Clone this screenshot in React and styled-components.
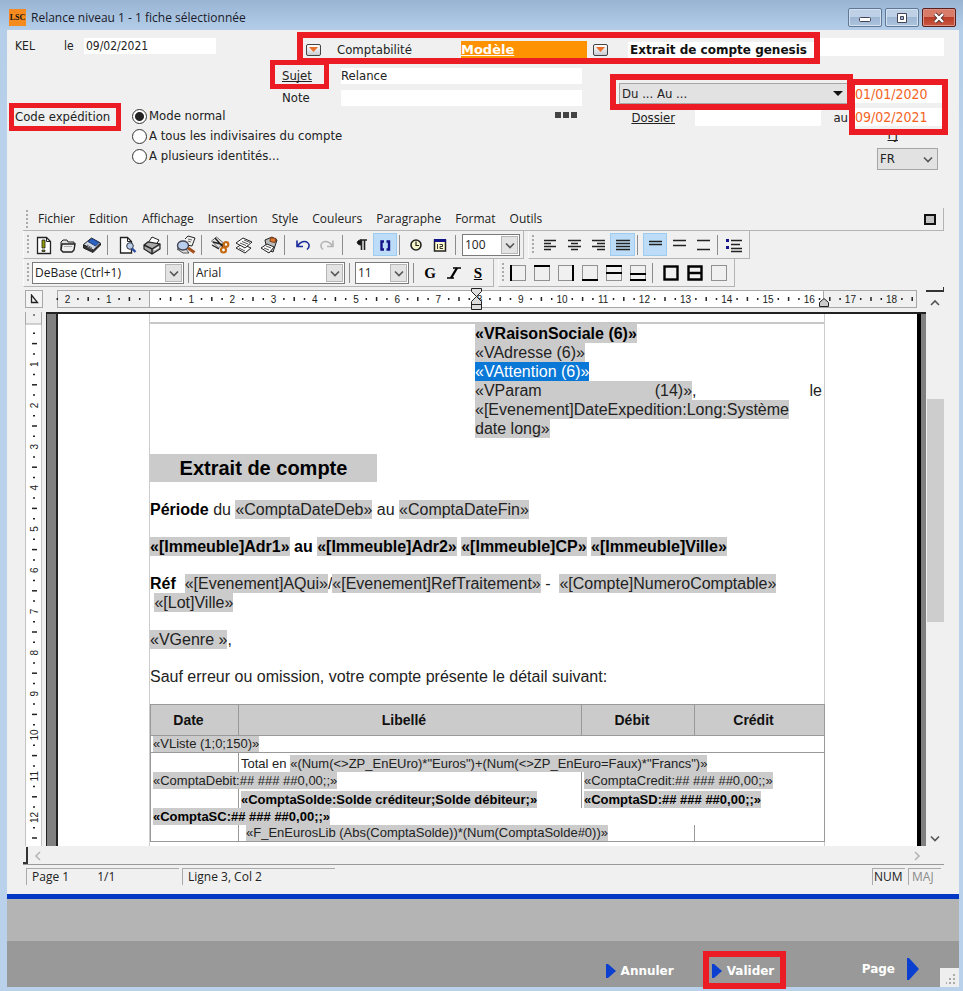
import React from "react";
import styled, { createGlobalStyle, css } from "styled-components";

const formFont = '"DejaVu Sans Condensed", "DejaVu Sans", sans-serif';
const formBold = '"DejaVu Sans", sans-serif';
const uiFont = '"Open Sans", "Noto Sans", sans-serif';
const docFont = '"Liberation Sans", Arial, sans-serif';
const RED = "#ec1c24";

const GlobalStyle = createGlobalStyle`
  * { box-sizing: border-box; }
  body { margin: 0; background: #b9d1ea; }
  button, input, select { font: inherit; color: inherit; margin: 0; }
`;

/* ---------- window ---------- */

const Window = styled.div`
  display: flex;
  flex-direction: column;
  height: 100vh;
  min-height: 700px;
  padding: 0 4px 4px 7px;
  background: linear-gradient(#98b4d3 0, #b4cee9 30px, #b9d1ea 130px);
  color: #222;
  font: 13px/16px ${formFont};
`;

const TitleBar = styled.header`
  display: flex;
  align-items: center;
  flex: none;
  height: 30px;
  padding: 5px 3px 0 2px;
  font: 13px/20px ${uiFont};
  color: #1a1a2a;
`;

const Logo = styled.span`
  width: 17px;
  height: 17px;
  margin-right: 5px;
  background: #f58a1f;
  color: #111;
  font: bold 8px/17px "Liberation Serif", serif;
  text-align: center;
`;

const WindowTitle = styled.h1`
  flex: 1;
  margin: 0;
  font: 12px/20px ${uiFont};
`;

const WindowButtons = styled.div`
  display: flex;
  gap: 3px;
`;

const WindowButton = styled.button`
  display: grid;
  place-items: center;
  width: 34px;
  height: 19px;
  padding: 0;
  border: 1px solid ${(p) => (p.$close ? "#5b1f1c" : "#5f7895")};
  border-radius: 2px;
  box-shadow: inset 0 0 0 1px ${(p) => (p.$close ? "#dd9185" : "#d3e1f0")};
  background: ${(p) =>
    p.$close
      ? "linear-gradient(#d97b69 0 45%, #b93a24 46%, #c95841)"
      : "linear-gradient(#bdd0e6 0 45%, #9db6d2 46%, #adc4de)"};
`;

const Content = styled.main`
  display: flex;
  flex-direction: column;
  flex: 1;
  min-height: 0;
  background: #f0f0f0;
`;

/* ---------- form ---------- */

const Form = styled.form`
  flex: none;
  height: 178px;
  padding: 8px 15px 0 8px;
`;

const Marked = styled.div`
  position: relative;
  &::after {
    content: "";
    position: absolute;
    z-index: 2;
    inset: ${(p) => p.$inset || "-6px"};
    border: ${(p) => p.$line || 6}px solid ${RED};
    pointer-events: none;
  }
`;

const TopRow = styled.div`
  display: flex;
  align-items: flex-start;
  height: 28px;
  font-size: 12px;
`;

const Label = styled.label`
  width: ${(p) => (p.$width ? `${p.$width}px` : "auto")};
  text-decoration: ${(p) => (p.$link ? "underline" : "none")};
  text-decoration-skip-ink: none;
  white-space: nowrap;
`;

const FieldLink = styled.a`
  color: inherit;
  text-decoration: underline;
  text-decoration-skip-ink: none;
`;

const TextInput = styled.input`
  width: ${(p) => (p.$width ? `${p.$width}px` : "auto")};
  flex: ${(p) => (p.$grow ? "1" : "none")};
  min-width: 0;
  height: ${(p) => p.$height || 16}px;
  padding: 0 ${(p) => p.$pad ?? 2}px;
  border: 0;
  outline: 0;
  background: #fff;
  ${(p) =>
    p.$accent &&
    css`
      color: #f3641e;
      font-size: 14px;
    `}
  ${(p) =>
    p.$strong &&
    css`
      color: #111;
      font: bold 12px/16px ${formBold};
    `}
`;

const ModelGroup = styled(Marked)`
  display: flex;
  align-items: center;
  width: 511px;
  height: 20px;
  margin-left: 87px;
  padding: 3px 0 0 3px;
`;

const ModelLink = styled.a`
  width: 126px;
  height: 17px;
  margin-right: 6px;
  background: #ff9200;
  color: #fff;
  font: bold 13px/18px ${formBold};
`;

const ModelLabel = styled.span`
  width: 140px;
  padding-left: 16px;
  font-size: 13px;
`;

const DropButton = styled.button`
  display: grid;
  place-items: center;
  width: 15px;
  height: 12px;
  margin-right: ${(p) => p.$after || 0}px;
  padding: 0;
  border: 1px solid #444;
  border-radius: 2px;
  background: linear-gradient(#fff, #c9cdd3);
`;

const FormBody = styled.div`
  display: flex;
  justify-content: space-between;
`;

const LeftBlock = styled.div`
  width: 567px;
`;

const SubjectGrid = styled.div`
  display: grid;
  grid-template-columns: 59px 241px;
  row-gap: 6px;
  justify-content: end;
  padding-top: 2px;
`;

const SubjectMark = styled(Marked)`
  justify-self: start;
`;

const Expedition = styled.div`
  display: flex;
  align-items: flex-start;
  margin-top: 2px;
`;

const ExpeditionMark = styled(Marked)`
  width: 117px;
  padding-top: 1px;
`;

const RadioGroup = styled.div`
  display: grid;
  row-gap: 4px;
  flex: 1;
`;

const RadioLabel = styled.label`
  display: flex;
  align-items: center;
  gap: 2px;
  height: 16px;
`;

const Radio = styled.input`
  appearance: none;
  width: 15px;
  height: 15px;
  border: 1px solid #333;
  border-radius: 50%;
  background: #fff;
  &:checked {
    background: radial-gradient(circle, #222 0 4px, #fff 5px);
  }
`;

const Dots = styled.button`
  display: flex;
  gap: 2px;
  margin: 4px 5px 0 0;
  padding: 0;
  border: 0;
  background: none;
  & > span {
    width: 6px;
    height: 6px;
    background: #444;
  }
`;

const RightBlock = styled.div`
  display: flex;
  gap: 7px;
  margin-top: 17px;
  padding-right: 2px;
`;

const PeriodColumn = styled.div`
  width: 229px;
`;

const DossierRow = styled.div`
  display: flex;
  align-items: center;
  justify-content: flex-end;
  margin-top: 6px;
`;

const AuLabel = styled.span`
  padding-left: 12px;
`;

const DateColumn = styled.div`
  display: flex;
  flex-direction: column;
  align-items: flex-end;
  width: 87px;
  margin-top: 2px;
`;

const Dates = styled(Marked)`
  display: grid;
  row-gap: 5px;
`;

const PjLink = styled(FieldLink)`
  margin: 1px 44px 0 0;
`;

const SelectBox = styled.span`
  display: inline-grid;
  grid-template-columns: 1fr auto;
  width: ${(p) => p.$width}px;
  height: ${(p) => p.$height || 22}px;
  border: 1px solid ${(p) => (p.$flat ? "#7a7a7a" : "#a6a6a6")};
  background: ${(p) => (p.$flat ? "#fff" : "#e2e2e2")};
  margin: ${(p) => p.$margin || "0"};
  & > select {
    grid-area: 1 / 1 / 2 / 3;
    appearance: none;
    width: 100%;
    min-width: 0;
    padding: 0 20px 0 2px;
    border: 0;
    outline: 0;
    background: transparent;
  }
  & > span {
    grid-area: 1 / 2;
    display: grid;
    place-items: center;
    width: 18px;
    pointer-events: none;
    ${(p) =>
      p.$flat &&
      css`
        margin: 1px;
        width: 17px;
        border: 1px solid #b5b5b5;
        background: #e3e3e3;
      `}
  }
`;

/* ---------- editor ---------- */

const Editor = styled.section`
  display: flex;
  flex-direction: column;
  flex: 1;
  min-height: 0;
  margin: 0 15px 9px 16px;
  font: 12px/16px ${uiFont};
`;

const MenuBar = styled.nav`
  display: flex;
  align-items: center;
  flex: none;
  height: 23px;
  padding-right: 7px;
  border: solid #b4b4b4;
  border-width: 0 1px 1px 0;
`;

const MenuItem = styled.button`
  margin-right: 14px;
  padding: 0;
  border: 0;
  background: none;
`;

const RestoreButton = styled.button`
  width: 12px;
  height: 11px;
  margin-left: auto;
  padding: 0;
  border: 2px solid #111;
  background: #c4c4c4;
`;

const Grip = styled.span`
  flex: none;
  width: 2px;
  height: 19px;
  margin: 0 ${(p) => p.$after ?? 6}px 0 3px;
  background: repeating-linear-gradient(#aaa 0 2px, transparent 2px 4px);
`;

const ToolRow = styled.div`
  display: flex;
  flex: none;
  gap: 4px;
  height: 28px;
`;

const Toolbar = styled.div`
  display: flex;
  align-items: center;
  padding-right: 3px;
  border: solid #b4b4b4;
  border-width: 0 1px 1px 0;
  border-left: 1px solid #fafafa;
`;

const ToolButton = styled.button`
  display: grid;
  place-items: center;
  width: ${(p) => (p.$wide ? 25 : 24)}px;
  height: 23px;
  padding: 0;
  border: 1px solid ${(p) => (p.$active ? "#9fcbee" : "transparent")};
  background: ${(p) => (p.$active ? "#bcdcf7" : "none")};
`;

const Separator = styled.span`
  width: 1px;
  height: 20px;
  margin: 0 ${(p) => p.$gap || 4}px 0 ${(p) => p.$before ?? 3}px;
  background: #8c8c8c;
`;

const Workspace = styled.div`
  display: grid;
  grid-template-columns: 23px minmax(0, 1fr) 18px;
  grid-template-rows: 25px minmax(0, 1fr) 19px;
  flex: 1;
  min-height: 0;
`;

const Corner = styled.div`
  display: grid;
  place-items: center;
  width: 18px;
  height: 18px;
  margin: 3px 0 0 2px;
  border: 1px solid #a8a8a8;
  background: #f4f4f4;
`;

const RulerTrack = styled.div`
  overflow: hidden;
  & > svg {
    display: block;
  }
`;

const ScrollCorner = styled.div`
  height: 5px;
  border: solid #333;
  border-width: 0 1px 2px 0;
`;

const VRuler = styled.div`
  overflow: hidden;
  margin-left: 2px;
  & > svg {
    display: block;
  }
`;

const Pane = styled.div`
  display: flex;
  overflow: hidden;
  border: solid #222;
  border-width: 2px 0 0 1px;
`;

const Desk = styled.div`
  flex: none;
  width: ${(p) => (p.$right ? 9 : 11)}px;
  background: #808080;
  ${(p) =>
    p.$right
      ? css`
          border-left: 4px solid #000;
        `
      : css`
          border-right: 2px solid #222;
        `}
`;

const Paper = styled.article`
  flex: 1;
  min-width: 0;
  padding-left: 91px;
  overflow: hidden;
  background: #fff;
`;

const PaperBody = styled.div`
  width: 676px;
  min-height: 100%;
  padding-top: 8px;
  border: solid #ccc;
  border-width: 0 1px;
  color: #222;
  font: 16px/19px ${docFont};
`;

const AddressZone = styled.div`
  border-top: 2px solid #c8c8c8;
  padding: 0 2px 0 325px;
`;

const Merge = styled.span`
  padding: 1px 0;
  background: ${(p) => (p.$selected ? "#0a78d7" : "#cbcbcb")};
  color: ${(p) => (p.$selected ? "#fff" : "inherit")};
`;

const Line = styled.p`
  margin: 0;
  font-weight: ${(p) => (p.$bold ? "bold" : "normal")};
  text-align-last: ${(p) => (p.$spread ? "justify" : "auto")};
  color: ${(p) => (p.$bold ? "#000" : "inherit")};
`;

const DocTitle = styled.h2`
  width: 227px;
  margin: 16px 0 18px;
  background: #cbcbcb;
  color: #000;
  font: bold 20px/28px ${docFont};
  text-align: center;
`;

const Paragraph = styled.p`
  margin: 0 0 18px;
  white-space: pre;
  & b {
    color: #000;
  }
`;

const DocTable = styled.table`
  width: 674px;
  table-layout: fixed;
  border-collapse: collapse;
  border: 1px solid #999;
  font: 13px/16px ${docFont};
  white-space: nowrap;
`;

const HeadCell = styled.th`
  height: 31px;
  padding: 0 12px 0 0;
  border: 1px solid #999;
  background: #cbcbcb;
  color: #111;
  font: bold 14px/18px ${docFont};
`;

const Cell = styled.td`
  height: ${(p) => p.$height || 17}px;
  padding: 0 0 0 ${(p) => p.$pad || 2}px;
  overflow: hidden;
  border-left: ${(p) => (p.$line ? "1px solid #999" : "0")};
  border-bottom: ${(p) => (p.$under ? "1px solid #999" : "0")};
  vertical-align: bottom;
  font-weight: ${(p) => (p.$bold ? "bold" : "normal")};
  color: ${(p) => (p.$bold ? "#000" : "inherit")};
`;

const VScroll = styled.div`
  display: flex;
  flex-direction: column;
  align-items: center;
  margin-top: -18px;
`;

const ScrollButton = styled.button`
  display: grid;
  place-items: center;
  width: 17px;
  height: 17px;
  padding: 0;
  border: 0;
  background: none;
`;

const VTrack = styled.div`
  display: flex;
  flex-direction: column;
  flex: 1;
  align-self: stretch;
  margin-left: 1px;
`;

const Thumb = styled.div`
  flex: 0 0 43%;
  background: #cdcdcd;
`;

const ThumbLead = styled.div`
  flex: 0 0 17%;
`;

const HScroll = styled.div`
  grid-column: 1 / -1;
  display: flex;
  justify-content: space-between;
  padding: 1px 19px 0 0;
  border-bottom: 1px solid #999;
`;

const HLead = styled.div`
  display: flex;
  gap: 1px;
`;

const HMark = styled.span`
  width: 5px;
  height: 17px;
  border: solid #333;
  border-width: 0 2px 2px 0;
`;

const StatusBar = styled.footer`
  display: flex;
  flex: none;
  gap: 3px;
  height: 20px;
  padding: 3px 3px 0;
  font-size: 12px;
`;

const StatusCell = styled.span`
  display: flex;
  gap: 28px;
  width: ${(p) => p.$width}px;
  height: 17px;
  padding-left: ${(p) => p.$pad ?? 5}px;
  margin-left: ${(p) => (p.$push ? "auto" : "0")};
  border: solid #aaa;
  border-width: 1px 0 0 1px;
  color: ${(p) => (p.$dim ? "#8a8a8a" : "#222")};
  white-space: nowrap;
`;

/* ---------- bottom bands ---------- */

const UpperBand = styled.div`
  flex: none;
  height: 47px;
  border-top: 5px solid #0238c4;
  background: #b4b4b4;
`;

const ActionBand = styled.div`
  display: flex;
  align-items: flex-start;
  justify-content: flex-end;
  flex: none;
  height: 46px;
  background: #999;
`;

const ActionButton = styled.button`
  display: flex;
  align-items: center;
  gap: ${(p) => p.$gap || 5}px;
  height: 20px;
  margin: ${(p) => p.$margin || "20px 0 0"};
  padding: 0;
  border: 0;
  background: none;
  color: #fff;
  font: bold 12px/16px ${formBold};
`;

const ValidMark = styled(Marked)`
  margin: 16px 82px 0 35px;
  width: 71px;
  height: 26px;
`;

const SizeGrip = styled.span`
  display: grid;
  place-items: end;
  align-self: flex-end;
  width: 19px;
  height: 19px;
  margin-left: 21px;
  padding: 3px;
  background: #eee;
`;

/* ---------- drawings ---------- */

const Svg = ({ children, w = 20, h = 20, box }) => (
  <svg width={w} height={h} viewBox={box || `0 0 ${w} ${h}`} fill="none" stroke="#222" aria-hidden="true">
    {children}
  </svg>
);

const Chevron = ({ color = "#555", dir = "down" }) => {
  const d = {
    down: "M1 3.5l4 4 4-4",
    up: "M1 7l4-4 4 4",
    left: "M7 1L3 5l4 4",
    right: "M3 1l4 4-4 4",
  }[dir];
  return (
    <Svg w={10} h={10}>
      <path d={d} stroke={color} strokeWidth="1.6" />
    </Svg>
  );
};

const Triangle = ({ w = 10, h = 14 }) => (
  <Svg w={w} h={h}>
    <path d={`M0 0h2L${w} ${h / 2} 2 ${h}H0z`} fill="#0a3fd0" stroke="none" />
  </Svg>
);

const icons = {
  nouveau: (
    <>
      <path d="M3.500 2.500h9l4 4v12h-13z" fill="#fff" strokeWidth="1.300" />
      <path d="M12.500 2.500v4h4" />
      <path d="M8 5h3v8H8zM8 15h3v1.500H8z" fill="#8f9a00" strokeWidth=".8" />
    </>
  ),
  ouvrir: (
    <>
      <path d="M3 15V7l2-2h4l1 2h6v2" fill="#ddd" />
      <path d="M3 15l1-6h13l-1 6-2 2H5z" fill="#eee" strokeWidth="1.400" />
      <path d="M6 11.500h8" stroke="#aaa" />
    </>
  ),
  enregistrer: (
    <>
      <path d="M1.500 9.500l8-6.500 9 5-7 7.500z" fill="#cfd6e4" />
      <path d="M6 6.500l4-3 7 4-3.500 3.500z" fill="#2a62c4" stroke="#223a70" />
      <path d="M1.500 10v3l9.500 4.500 7.500-7.500V8.500L11.500 15z" fill="#333" />
      <path d="M5 10l5 3M5 12l5 2.500" stroke="#666" />
    </>
  ),
  apercu: (
    <>
      <path d="M3.500 2.500h7l4 4v11.500h-11z" fill="#fff" strokeWidth="1.300" />
      <path d="M10.500 2.500v4h4" />
      <circle cx="13" cy="11" r="3.300" fill="#b9cdea" stroke="#334" />
      <path d="M15 13.500l3.500 3.500" stroke="#2a4aa0" strokeWidth="2.400" />
    </>
  ),
  imprimer: (
    <>
      <path d="M6 8l4-6 7 3-3 5" fill="#fff" />
      <path d="M2 10l4-3 12 2v5l-8 5-8-5z" fill="#aaa" strokeWidth="1.200" />
      <path d="M2 10l8 4 8-5M10 14v5" strokeWidth="1.400" />
      <path d="M12 15l5-3" stroke="#fff" strokeWidth="1.400" />
    </>
  ),
  rechercher: (
    <>
      <path d="M9 4l3-3 7 2-3 8-5-1" fill="#f2f2f2" />
      <path d="M12 4l4 1M12 6l3 1" stroke="#666" />
      <path d="M1 14l6 4h6l-3-4z" fill="#ddd" stroke="#555" />
      <ellipse cx="7" cy="10.500" rx="5.500" ry="4.500" fill="#b9cdee" stroke="#445" strokeWidth="1.400" />
      <path d="M12 13l6.500 4.500" stroke="#a4501d" strokeWidth="3" />
    </>
  ),
  couper: (
    <>
      <path d="M1.500 6l5-4 7 6-5 5z" fill="#e0e0e0" stroke="#666" />
      <path d="M5 3l8 9M3 7l11 3M2 10l7 4" strokeWidth="1.400" />
      <circle cx="16" cy="9.500" r="2.300" fill="#fff" stroke="#c46a10" strokeWidth="2.200" />
      <circle cx="13.500" cy="15" r="2.500" fill="#fff" stroke="#c46a10" strokeWidth="2.200" />
    </>
  ),
  copier: (
    <>
      <path d="M2 13l6-4 9 4-6 5z" fill="#fff" />
      <path d="M2 8l7-5 9 4-7 6z" fill="#fff" />
      <path d="M6 8l6 2.500M8 6.500l6 2.500M10 5l6 2.500M5 13l6 3" stroke="#555" />
    </>
  ),
  coller: (
    <>
      <path d="M6 5l7-3 5 3-4 12-6-2z" fill="#bbb" />
      <path d="M2 13l6-4 7 3-5 6z" fill="#fff" />
      <path d="M5 13l5 2M7 11l5 2" stroke="#555" />
      <path d="M11.500 2.500l5.500 1-1 4-5-1z" fill="#d9752c" stroke="#7a3c14" />
    </>
  ),
  annuler: <path d="M4 5.500v6h6M4.500 11C7 6.500 12 5.500 14.500 7.500c2.500 2 2 5-.5 7" stroke="#1a2a9a" strokeWidth="1.600" />,
  retablir: <path d="M16 5.500v6h-6M15.500 11C13 6.500 8 5.500 5.500 7.500c-2.500 2-2 5 .5 7" stroke="#b4b4b4" strokeWidth="1.600" />,
  symboles: (
    <>
      <path d="M9 5h7M10.500 5v10M13.500 5v10" strokeWidth="1.600" />
      <path d="M10 5v5c-5 0-5-5 0-5z" fill="#111" />
    </>
  ),
  references: <path d="M9 6.500H6.500v8H9M11.500 6.500H14v8h-2.500" stroke="#13138a" strokeWidth="2.400" />,
  heure: (
    <>
      <circle cx="10" cy="10" r="5" fill="#f6f6c8" strokeWidth="1.600" />
      <path d="M10 6.500V10.500h3" strokeWidth="1.200" />
    </>
  ),
  date: (
    <>
      <rect x="4.500" y="5" width="11" height="11" fill="#fffbd0" strokeWidth="1.500" />
      <path d="M4 5.500h12" stroke="#13138a" strokeWidth="3" />
      <path d="M7.500 9v5M9.500 9.500h3v2h-2.500v2h3" stroke="#333" />
    </>
  ),
  gauche: <path d="M4 5.500h12M4 8.500h7M4 11.500h12M4 14.500h7" strokeWidth="1.400" />,
  centre: <path d="M4 5.500h13M7 8.500h7M4 11.500h13M7 14.500h7" strokeWidth="1.400" />,
  droite: <path d="M4 5.500h13M9 8.500h8M4 11.500h13M9 14.500h8" strokeWidth="1.400" />,
  justifie: <path d="M3 5.500h14M3 8.500h14M3 11.500h14M3 14.500h14" strokeWidth="1.400" />,
  simple: <path d="M4 6.500h13M4 9.500h13" strokeWidth="1.400" />,
  demi: <path d="M4 5.500h13M4 10.500h13" strokeWidth="1.400" />,
  double: <path d="M4 5.500h13M4 14.500h13" strokeWidth="1.400" />,
  puces: (
    <>
      <path d="M2 4h3v3H2zM2 11h3v3H2z" fill="#13138a" stroke="none" />
      <path d="M7 5.500h11M7 9.500h9M7 13.500h11M7 16.500h11" strokeWidth="1.300" />
    </>
  ),
};

const Dotted = () => <rect x="2.500" y="2.500" width="15" height="15" stroke="#333" strokeDasharray="1 1" />;
const borderIcon = (d) => (
  <>
    <Dotted />
    <path d={d} stroke="#000" strokeWidth="2" />
  </>
);
const borderTools = [
  ["Bordure gauche", borderIcon("M3 2v16")],
  ["Bordure haute", borderIcon("M2 3h16")],
  ["Bordure droite", borderIcon("M17 2v16")],
  ["Bordure basse", borderIcon("M2 17h16")],
  ["Bordures haute et milieu", borderIcon("M2 3h16M2 10h16")],
  ["Bordures milieu et basse", borderIcon("M2 11h16M2 17h16")],
];
const frameTools = [
  ["Cadre", <rect key="a" x="3.500" y="3.500" width="13" height="13" stroke="#000" strokeWidth="2.400" />],
  ["Cadre et lignes", <path key="b" d="M3.500 3.500h13v13h-13zM3.500 10h13" stroke="#000" strokeWidth="2.400" />],
  ["Sans bordure", <Dotted key="c" />],
];

/* one centimetre on screen, in pixels */
const CM = 41.2;

const marks = (from, to, zero) => {
  const out = [];
  for (let q = from * 4; q <= to * 4; q += 1) {
    if (q !== 0) out.push({ q, at: zero + (q / 4) * CM });
  }
  return out;
};

const HorizontalRuler = () => (
  <Svg w={880} h={25} box="0 0 880 25">
    <rect x="11.500" y="3.500" width="859" height="17" fill="#f0f0f0" stroke="#a8a8a8" />
    <rect x="103.500" y="3.500" width="674" height="17" fill="#fff" stroke="#a8a8a8" />
    {marks(-2.25, 18.5, 104).map(({ q, at }) =>
      q % 4 === 0 ? (
        <text key={q} x={at} y="16" textAnchor="middle" fontSize="10" fontFamily="Liberation Sans" fill="#222" stroke="none">
          {Math.abs(q / 4)}
        </text>
      ) : (
        <path key={q} d={q % 2 === 0 ? `M${at} 10v4` : `M${at} 11v2`} strokeWidth="1.500" />
      )
    )}
    <path d="M425.500 1.500h10v3l-5 5-5-5zM430.500 9.500l5 5v8h-10v-8zM425.500 17.500h10" fill="#ddd" />
    <path d="M773.500 19.500v-4l4.500-4 4.500 4v4z" fill="#ccc" />
  </Svg>
);

const VerticalRuler = () => (
  <Svg w={18} h={600}>
    <rect x=".5" y="-1" width="16" height="602" fill="#fff" stroke="#c4c4c4" />
    <rect x=".5" y="-1" width="16" height="13" fill="#f0f0f0" stroke="#a8a8a8" />
    <path d="M9 2.500v1" strokeWidth="2" />
    {marks(0, 12.5, 11).map(({ q, at }) =>
      q % 4 === 0 ? (
        <text
          key={q}
          x="0"
          y="0"
          transform={`translate(13 ${at}) rotate(-90)`}
          textAnchor="middle"
          fontSize="10"
          fontFamily="Liberation Sans"
          fill="#222"
          stroke="none"
        >
          {q / 4}
        </text>
      ) : (
        <path key={q} d={q % 2 === 0 ? `M7 ${at}h5` : `M8 ${at}h2`} strokeWidth="1.500" />
      )
    )}
  </Svg>
);

/* ---------- parts ---------- */

const Tool = ({ name, active, wide }) => (
  <ToolButton type="button" aria-label={name} $active={active} $wide={wide}>
    <Svg>{icons[name]}</Svg>
  </ToolButton>
);

const Drop = ({ label, value, arrow, ...box }) => (
  <SelectBox {...box}>
    <select aria-label={label} defaultValue={value}>
      <option>{value}</option>
    </select>
    <span>
      {arrow === "solid" ? (
        <Svg w={10} h={6}>
          <path d="M0 0h10L5 5z" fill="#111" stroke="none" />
        </Svg>
      ) : (
        <Chevron />
      )}
    </span>
  </SelectBox>
);

const OrangeDrop = ({ label, after }) => (
  <DropButton type="button" aria-label={label} $after={after}>
    <Svg w={9} h={7}>
      <path d="M0 1h9L4.500 6z" fill="#e8702a" stroke="none" />
    </Svg>
  </DropButton>
);

const menus = ["Fichier", "Edition", "Affichage", "Insertion", "Style", "Couleurs", "Paragraphe", "Format", "Outils"];
const modes = ["Mode normal", "A tous les indivisaires du compte", "A plusieurs identités..."];

const HeaderForm = () => (
  <Form onSubmit={(e) => e.preventDefault()}>
    <TopRow>
      <Label as="span" $width={49}>KEL</Label>
      <Label htmlFor="date" $width={20}>le</Label>
      <TextInput id="date" $width={132} defaultValue="09/02/2021" />
      <ModelGroup>
        <OrangeDrop label="Choisir le domaine" />
        <ModelLabel>Comptabilité</ModelLabel>
        <ModelLink href="#modele">Modèle</ModelLink>
        <OrangeDrop label="Choisir le modèle" after={20} />
        <TextInput
          aria-label="Modèle choisi"
          $grow
          $strong
          defaultValue="Extrait de compte genesis"
        />
      </ModelGroup>
      <TextInput aria-label="Complément" $grow $height={18} />
    </TopRow>
    <FormBody>
      <LeftBlock>
        <SubjectGrid>
          <SubjectMark $line={5} $inset="-8px -17px -5px -12px">
            <Label htmlFor="sujet" $link>Sujet</Label>
          </SubjectMark>
          <TextInput id="sujet" $pad={0} defaultValue="Relance" />
          <Label htmlFor="note">Note</Label>
          <TextInput id="note" />
        </SubjectGrid>
        <Expedition>
          <ExpeditionMark $line={5} $inset="-5px 11px -6px -6px" id="expedition">
            Code expédition
          </ExpeditionMark>
          <RadioGroup role="radiogroup" aria-labelledby="expedition">
            {modes.map((mode, i) => (
              <RadioLabel key={mode}>
                <Radio type="radio" name="mode" defaultChecked={i === 0} />
                {mode}
              </RadioLabel>
            ))}
          </RadioGroup>
          <Dots type="button" aria-label="Plus">
            <span />
            <span />
            <span />
          </Dots>
        </Expedition>
      </LeftBlock>
      <RightBlock>
        <PeriodColumn>
          <Marked $inset="-9px -5px -6px -9px">
            <Drop label="Période" value="Du ... Au ..." arrow="solid" $width={229} $height={21} />
          </Marked>
          <DossierRow>
            <Label htmlFor="dossier" $link $width={64}>Dossier</Label>
            <TextInput id="dossier" $width={126} />
            <AuLabel>au</AuLabel>
          </DossierRow>
        </PeriodColumn>
        <DateColumn>
          <Dates $inset="-6px -6px -9px -6px">
            <TextInput aria-label="Du" $accent $width={87} $height={18} $pad={0} defaultValue="01/01/2020" />
            <TextInput aria-label="Au" $accent $width={87} $height={18} $pad={0} defaultValue="09/02/2021" />
          </Dates>
          <PjLink href="#pj">PJ</PjLink>
          <Drop label="Langue" value="FR" $width={61} $margin="5px 4px 0 0" />
        </DateColumn>
      </RightBlock>
    </FormBody>
  </Form>
);

const Letter = () => (
  <PaperBody>
    <AddressZone>
      <Line $bold><Merge>«VRaisonSociale (6)»</Merge></Line>
      <Line><Merge>«VAdresse (6)»</Merge></Line>
      <Line><Merge $selected>«VAttention (6)»</Merge></Line>
      <Line $spread><Merge>«VParam (14)»</Merge>, le</Line>
      <Line><Merge>«[Evenement]DateExpedition:Long:Système<br />date long»</Merge></Line>
    </AddressZone>
    <DocTitle>Extrait de compte</DocTitle>
    <Paragraph>
      <b>Période</b> du <Merge>«ComptaDateDeb»</Merge> au <Merge>«ComptaDateFin»</Merge>
    </Paragraph>
    <Paragraph>
      <b>
        <Merge>«[Immeuble]Adr1»</Merge> au <Merge>«[Immeuble]Adr2»</Merge> <Merge>«[Immeuble]CP»</Merge>{" "}
        <Merge>«[Immeuble]Ville»</Merge>
      </b>
    </Paragraph>
    <Paragraph>
      <b>Réf</b>{"  "}
      <Merge>«[Evenement]AQui»</Merge>/<Merge>«[Evenement]RefTraitement»</Merge>{" -  "}
      <Merge>«[Compte]NumeroComptable»</Merge>
      {"\n "}
      <Merge>«[Lot]Ville»</Merge>
    </Paragraph>
    <Paragraph><Merge>«VGenre »</Merge>,</Paragraph>
    <Paragraph>Sauf erreur ou omission, votre compte présente le détail suivant:</Paragraph>
    <DocTable>
      <colgroup>
        <col width="88" />
        <col width="343" />
        <col width="113" />
        <col width="130" />
      </colgroup>
      <thead>
        <tr>
          {["Date", "Libellé", "Débit", "Crédit"].map((t) => (
            <HeadCell key={t} scope="col">{t}</HeadCell>
          ))}
        </tr>
      </thead>
      <tbody>
        <tr>
          <Cell colSpan={4} $under><Merge>«VListe (1;0;150)»</Merge></Cell>
        </tr>
        <tr>
          <Cell $height={19} />
          <Cell colSpan={3} $line>
            Total en <Merge>«(Num(&lt;&gt;ZP_EnEUro)*"Euros")+(Num(&lt;&gt;ZP_EnEuro=Faux)*"Francs")»</Merge>
          </Cell>
        </tr>
        <tr>
          <Cell colSpan={2}><Merge>«ComptaDebit:## ### ##0,00;;»</Merge></Cell>
          <Cell colSpan={2} $line><Merge>«ComptaCredit:## ### ##0,00;;»</Merge></Cell>
        </tr>
        <tr>
          <Cell $height={19} />
          <Cell $line $bold><Merge>«ComptaSolde:Solde créditeur;Solde débiteur;»</Merge></Cell>
          <Cell colSpan={2} $line $bold><Merge>«ComptaSD:## ### ##0,00;;»</Merge></Cell>
        </tr>
        <tr>
          <Cell colSpan={4} $bold><Merge>«ComptaSC:## ### ##0,00;;»</Merge></Cell>
        </tr>
        <tr>
          <Cell />
          <Cell colSpan={2} $line $pad={7}><Merge>«F_EnEurosLib (Abs(ComptaSolde))*(Num(ComptaSolde#0))»</Merge></Cell>
          <Cell $line />
        </tr>
      </tbody>
    </DocTable>
  </PaperBody>
);

const StyleLetter = styled.span`
  color: #000;
  font: bold 15px/18px "Liberation Serif", serif;
  text-decoration: ${(p) => (p.$under ? "underline" : "none")};
`;

export default function App() {
  return (
    <>
      <GlobalStyle />
      <Window>
        <TitleBar>
          <Logo>LSC</Logo>
          <WindowTitle>Relance niveau 1 - 1 fiche sélectionnée</WindowTitle>
          <WindowButtons>
            <WindowButton type="button" aria-label="Réduire">
              <Svg w={14} h={12}><rect x="1.500" y="5.500" width="11" height="4" rx="1" fill="#fff" stroke="#445" /></Svg>
            </WindowButton>
            <WindowButton type="button" aria-label="Agrandir">
              <Svg w={14} h={12}><path d="M2.500 1.500h9v9h-9zM5.500 4.500v3h3v-3z" fill="#fff" fillRule="evenodd" stroke="#445" /></Svg>
            </WindowButton>
            <WindowButton type="button" aria-label="Fermer" $close>
              <Svg w={14} h={12}>
                <path d="M3 2l8 8M11 2l-8 8" stroke="#533" strokeWidth="4" />
                <path d="M3 2l8 8M11 2l-8 8" stroke="#fff" strokeWidth="2.400" />
              </Svg>
            </WindowButton>
          </WindowButtons>
        </TitleBar>
        <Content>
          <HeaderForm />
          <Editor>
            <MenuBar>
              <Grip $after={10} />
              {menus.map((m) => <MenuItem key={m} type="button">{m}</MenuItem>)}
              <RestoreButton type="button" aria-label="Restaurer" />
            </MenuBar>
            <ToolRow>
              <Toolbar>
                <Grip $after={2} />
                <Tool name="nouveau" wide />
                <Tool name="ouvrir" />
                <Tool name="enregistrer" />
                <Separator $gap={6} />
                <Tool name="apercu" wide />
                <Tool name="imprimer" wide />
                <Separator $gap={5} />
                <Tool name="rechercher" wide />
                <Separator $gap={5} />
                <Tool name="couper" wide />
                <Tool name="copier" />
                <Tool name="coller" wide />
                <Separator $gap={5} />
                <Tool name="annuler" wide />
                <Tool name="retablir" />
                <Separator $gap={5} />
                <Tool name="symboles" wide />
                <Tool name="references" active />
                <Separator $before={2} $gap={4} />
                <Tool name="heure" />
                <Tool name="date" />
                <Separator $gap={6} />
                <Drop label="Zoom" value="100" $flat $width={58} />
              </Toolbar>
              <Toolbar>
                <Grip $after={4} />
                <Tool name="gauche" />
                <Tool name="centre" />
                <Tool name="droite" />
                <Tool name="justifie" active wide />
                <Separator $before={2} $gap={5} />
                <Tool name="simple" active />
                <Tool name="demi" />
                <Tool name="double" />
                <Separator $before={2} $gap={4} />
                <Tool name="puces" />
              </Toolbar>
            </ToolRow>
            <ToolRow>
              <Toolbar>
                <Grip $after={3} />
                <Drop label="Style" value="DeBase (Ctrl+1)" $flat $width={152} />
                <Separator $before={4} />
                <Drop label="Police" value="Arial" $flat $width={152} />
                <Separator $before={4} $gap={5} />
                <Drop label="Taille" value="11" $flat $width={54} />
                <Separator $before={4} />
                <ToolButton type="button" aria-label="Gras"><StyleLetter>G</StyleLetter></ToolButton>
                <ToolButton type="button" aria-label="Italique">
                  <Svg><path d="M9 5h8M3 15h7" strokeWidth="1.500" stroke="#000" /><path d="M13 5L7 15" stroke="#000" strokeWidth="2.400" /></Svg>
                </ToolButton>
                <ToolButton type="button" aria-label="Souligné"><StyleLetter $under>S</StyleLetter></ToolButton>
              </Toolbar>
              <Toolbar>
                <Grip $after={2} />
                {borderTools.map(([label, icon]) => (
                  <ToolButton key={label} type="button" aria-label={label}><Svg>{icon}</Svg></ToolButton>
                ))}
                <Separator $before={2} $gap={6} />
                {frameTools.map(([label, icon]) => (
                  <ToolButton key={label} type="button" aria-label={label}><Svg>{icon}</Svg></ToolButton>
                ))}
              </Toolbar>
            </ToolRow>
            <Workspace>
              <Corner><Svg w={10} h={10}><path d="M2.500 1v7.500h6z" strokeWidth="1.300" /></Svg></Corner>
              <RulerTrack><HorizontalRuler /></RulerTrack>
              <ScrollCorner />
              <VRuler><VerticalRuler /></VRuler>
              <Pane>
                <Desk />
                <Paper><Letter /></Paper>
                <Desk $right />
              </Pane>
              <VScroll>
                <ScrollButton type="button" aria-label="Défiler vers le haut"><Chevron dir="up" /></ScrollButton>
                <VTrack><ThumbLead /><Thumb /></VTrack>
                <ScrollButton type="button" aria-label="Défiler vers le bas"><Chevron /></ScrollButton>
              </VScroll>
              <HScroll>
                <HLead>
                  <HMark />
                  <ScrollButton type="button" aria-label="Défiler à gauche"><Chevron dir="left" color="#b4b4b4" /></ScrollButton>
                </HLead>
                <ScrollButton type="button" aria-label="Défiler à droite"><Chevron dir="right" color="#b4b4b4" /></ScrollButton>
              </HScroll>
            </Workspace>
            <StatusBar>
              <StatusCell $width={153}><span>Page 1</span><span>1/1</span></StatusCell>
              <StatusCell $width={153}>Ligne 3, Col 2</StatusCell>
              <StatusCell $width={33} $pad={1} $push>NUM</StatusCell>
              <StatusCell $width={33} $pad={3} $dim>MAJ</StatusCell>
            </StatusBar>
          </Editor>
          <UpperBand />
          <ActionBand>
            <ActionButton type="button"><Triangle />Annuler</ActionButton>
            <ValidMark><ActionButton type="button" $margin="4px 0 0 3px"><Triangle />Valider</ActionButton></ValidMark>
            <ActionButton type="button" $gap={12} $margin="18px 0 0">Page<Triangle w={12} h={22} /></ActionButton>
            <SizeGrip>
              <Svg w={10} h={10}><path d="M8 0v2M8 4v2M4 4v2M8 8v2M4 8v2M0 8v2" stroke="#aaa" strokeWidth="2" /></Svg>
            </SizeGrip>
          </ActionBand>
        </Content>
      </Window>
    </>
  );
}
